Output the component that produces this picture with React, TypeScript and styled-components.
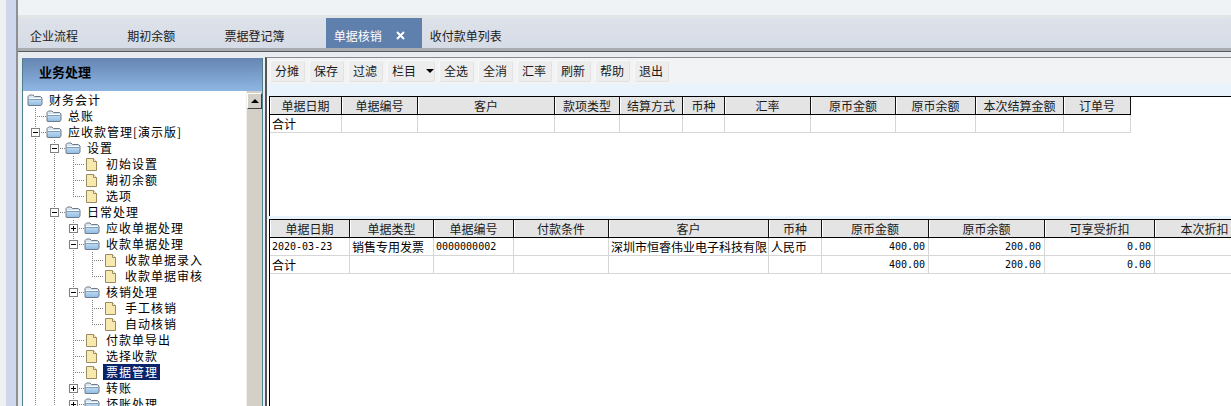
import React from "react";
import styled, { createGlobalStyle } from "styled-components";

const GlobalStyle = createGlobalStyle`
  html, body { margin: 0; padding: 0; height: 100%; overflow: hidden; background: #e9ecf1; }
  body { font-family: "Noto Sans CJK SC", "Liberation Sans", sans-serif; font-size: 12px; color: #000; }
  #root { height: 406px; }
`;

type Vertical = "none" | "through" | "end";
type IndentCell = { v: Vertical; h?: boolean; box?: "plus" | "minus" };
type TreeNode = { label: string; icon: "folder" | "file"; cells: IndentCell[]; selected?: boolean };

const thru: IndentCell = { v: "through" };

const TREE: TreeNode[] = [
  { label: "财务会计", icon: "folder", cells: [] },
  { label: "总账", icon: "folder", cells: [{ v: "through", h: true }] },
  { label: "应收款管理[演示版]", icon: "folder", cells: [{ v: "through", h: true, box: "minus" }] },
  { label: "设置", icon: "folder", cells: [thru, { v: "through", h: true, box: "minus" }] },
  { label: "初始设置", icon: "file", cells: [thru, thru, { v: "through", h: true }] },
  { label: "期初余额", icon: "file", cells: [thru, thru, { v: "through", h: true }] },
  { label: "选项", icon: "file", cells: [thru, thru, { v: "end", h: true }] },
  { label: "日常处理", icon: "folder", cells: [thru, { v: "through", h: true, box: "minus" }] },
  { label: "应收单据处理", icon: "folder", cells: [thru, thru, { v: "through", h: true, box: "plus" }] },
  { label: "收款单据处理", icon: "folder", cells: [thru, thru, { v: "through", h: true, box: "minus" }] },
  { label: "收款单据录入", icon: "file", cells: [thru, thru, thru, { v: "through", h: true }] },
  { label: "收款单据审核", icon: "file", cells: [thru, thru, thru, { v: "end", h: true }] },
  { label: "核销处理", icon: "folder", cells: [thru, thru, { v: "through", h: true, box: "minus" }] },
  { label: "手工核销", icon: "file", cells: [thru, thru, thru, { v: "through", h: true }] },
  { label: "自动核销", icon: "file", cells: [thru, thru, thru, { v: "end", h: true }] },
  { label: "付款单导出", icon: "file", cells: [thru, thru, { v: "through", h: true }] },
  { label: "选择收款", icon: "file", cells: [thru, thru, { v: "through", h: true }] },
  { label: "票据管理", icon: "file", cells: [thru, thru, { v: "through", h: true }], selected: true },
  { label: "转账", icon: "folder", cells: [thru, thru, { v: "through", h: true, box: "plus" }] },
  { label: "坏账处理", icon: "folder", cells: [thru, thru, { v: "through", h: true, box: "plus" }] },
];

const TABS = ["企业流程", "期初余额", "票据登记簿", "单据核销", "收付款单列表"];
const TOOLS = ["分摊", "保存", "过滤", "栏目", "全选", "全消", "汇率", "刷新", "帮助", "退出"];

const TOP_COLUMNS = [
  ["单据日期", 72], ["单据编号", 76], ["客户", 137], ["款项类型", 65], ["结算方式", 63], ["币种", 42],
  ["汇率", 86], ["原币金额", 85], ["原币余额", 80], ["本次结算金额", 88], ["订单号", 67],
] as const;

const BOTTOM_COLUMNS = [
  ["单据日期", 80], ["单据类型", 84], ["单据编号", 80], ["付款条件", 95], ["客户", 160], ["币种", 53],
  ["原币金额", 107], ["原币余额", 116], ["可享受折扣", 110], ["本次折扣", 100],
] as const;

function FolderIcon() {
  return (
    <svg width="16" height="16" viewBox="0 0 16 16">
      <defs>
        <linearGradient id="folderFill" x1="0" y1="0" x2="0" y2="1">
          <stop offset="0" stopColor="#e4f0fa" />
          <stop offset="1" stopColor="#8fbde6" />
        </linearGradient>
      </defs>
      <path
        d="M1 13V4.500L2.500 3h3.500l1.500 1.500h6L15 6v6l-1 1.500H2z"
        fill="url(#folderFill)"
        stroke="#6f7a84"
      />
      <path d="M2 6.500h12" stroke="#fff" fill="none" />
      <path d="M2 7.500h12" stroke="#7f9db8" fill="none" />
    </svg>
  );
}

function FileIcon() {
  return (
    <svg width="16" height="16" viewBox="0 0 16 16">
      <path d="M2.500 2.500h7l3 3v9h-10z" fill="#f8e9ae" stroke="#9a8c60" />
      <path d="M9.500 2.500v3h3" fill="#fffbe6" stroke="#9a8c60" />
    </svg>
  );
}

function CloseIcon() {
  return (
    <svg width="9" height="9" viewBox="0 0 9 9">
      <path d="M1 1l7 7M8 1l-7 7" stroke="#fff" strokeWidth="2" fill="none" />
    </svg>
  );
}

export default function App() {
  return (
    <Page>
      <GlobalStyle />
      <LeftRail />
      <Workspace>
        <TopStrip />
        <TabBar>
          {TABS.map((tab) => (
            <Tab key={tab} $active={tab === "单据核销"}>
              {tab}
              {tab === "单据核销" && (
                <TabClose>
                  <CloseIcon />
                </TabClose>
              )}
            </Tab>
          ))}
        </TabBar>
        <Main>
          <SidePanel>
            <SideHeader>业务处理</SideHeader>
            <SideBody>
              <Tree>
                {TREE.map((node) => (
                  <TreeRow key={node.label}>
                    {node.cells.map((cell, i) => (
                      <Indent key={i} $v={cell.v} $h={!!cell.h}>
                        {cell.box && (
                          <ExpandBox>
                            <BoxMark $plus={cell.box === "plus"} />
                          </ExpandBox>
                        )}
                      </Indent>
                    ))}
                    <NodeIcon>{node.icon === "folder" ? <FolderIcon /> : <FileIcon />}</NodeIcon>
                    <NodeLabel $selected={!!node.selected}>{node.label}</NodeLabel>
                  </TreeRow>
                ))}
              </Tree>
              <ScrollBar>
                <ScrollButton>
                  <ArrowUp />
                </ScrollButton>
              </ScrollBar>
            </SideBody>
          </SidePanel>
          <ContentPanel>
            <Toolbar>
              {TOOLS.map((tool) => (
                <ToolButton key={tool} $wide={tool === "栏目"}>
                  {tool}
                  {tool === "栏目" && <DropCaret />}
                </ToolButton>
              ))}
            </Toolbar>
            <BlueGap $h={12} />
            <GridPane $h={120}>
              <Grid $width={861}>
                <colgroup>
                  {TOP_COLUMNS.map(([name, w]) => (
                    <col key={name + w} style={{ width: w }} />
                  ))}
                </colgroup>
                <thead>
                  <tr>
                    {TOP_COLUMNS.map(([name, w]) => (
                      <HeadCell key={name + w}>{name}</HeadCell>
                    ))}
                  </tr>
                </thead>
                <tbody>
                  <tr>
                    {TOP_COLUMNS.map(([name, w], i) => (
                      <BodyCell key={name + w}>{i === 0 ? "合计" : ""}</BodyCell>
                    ))}
                  </tr>
                </tbody>
              </Grid>
            </GridPane>
            <BlueGap $h={3} />
            <GridPane>
              <Grid $width={885}>
                <colgroup>
                  {BOTTOM_COLUMNS.map(([name, w]) => (
                    <col key={name} style={{ width: w }} />
                  ))}
                </colgroup>
                <thead>
                  <tr>
                    {BOTTOM_COLUMNS.map(([name]) => (
                      <HeadCell key={name}>{name}</HeadCell>
                    ))}
                  </tr>
                </thead>
                <tbody>
                  <tr>
                    <BodyCell><Mono>2020-03-23</Mono></BodyCell>
                    <BodyCell>销售专用发票</BodyCell>
                    <BodyCell><Mono>0000000002</Mono></BodyCell>
                    <BodyCell />
                    <BodyCell>深圳市恒睿伟业电子科技有限</BodyCell>
                    <BodyCell>人民币</BodyCell>
                    <BodyCell $right><Mono>400.00</Mono></BodyCell>
                    <BodyCell $right><Mono>200.00</Mono></BodyCell>
                    <BodyCell $right><Mono>0.00</Mono></BodyCell>
                    <BodyCell />
                  </tr>
                  <tr>
                    <BodyCell>合计</BodyCell>
                    <BodyCell />
                    <BodyCell />
                    <BodyCell />
                    <BodyCell />
                    <BodyCell />
                    <BodyCell $right><Mono>400.00</Mono></BodyCell>
                    <BodyCell $right><Mono>200.00</Mono></BodyCell>
                    <BodyCell $right><Mono>0.00</Mono></BodyCell>
                    <BodyCell />
                  </tr>
                </tbody>
              </Grid>
            </GridPane>
          </ContentPanel>
        </Main>
      </Workspace>
    </Page>
  );
}

const Page = styled.div`
  display: flex;
  width: 1231px;
  height: 406px;
  overflow: hidden;
`;

const LeftRail = styled.div`
  flex: 0 0 18px;
  box-sizing: border-box;
  border-left: 6px solid #eef0f2;
  border-right: 2px solid #8e9092;
  background: #d0d7ec;
`;

const Workspace = styled.div`
  flex: 1;
  min-width: 0;
  display: flex;
  flex-direction: column;
`;

const TopStrip = styled.div`
  flex: 0 0 15px;
  background: #f0f3f6;
`;

const TabBar = styled.div`
  flex: 0 0 37px;
  box-sizing: border-box;
  display: flex;
  align-items: flex-end;
  padding: 3px 0 4px 4px;
  background: linear-gradient(#e2e5e5 0, #e2e5e5 3px, #dde1e9 4px, #d5dbe6 100%);
  box-shadow: inset 0 -1px 0 #5a5a5a, inset 0 -4px 0 #a9adb2;
`;

const Tab = styled.div<{ $active: boolean }>`
  height: 30px;
  line-height: 36px;
  padding: 0 ${({ $active }) => ($active ? "40px" : "41.25px")} 0 8px;
  white-space: nowrap;
  position: relative;
  color: ${({ $active }) => ($active ? "#fff" : "#1a1a1a")};
  background: ${({ $active }) => ($active ? "#5f7fad" : "transparent")};
`;

const TabClose = styled.span`
  position: absolute;
  left: 70px;
  top: 13px;
  width: 9px;
  height: 9px;
  svg { display: block; }
`;

const Main = styled.div`
  flex: 1;
  min-height: 0;
  display: flex;
  padding: 6px 0 0 4px;
  background: #e9ecf1;
`;

const SidePanel = styled.div`
  flex: 0 0 241px;
  box-sizing: border-box;
  display: flex;
  flex-direction: column;
  border-right: 1px solid #4f7f8c;
  border-left: 1px solid #4f7f8c;
`;

const SideHeader = styled.div`
  flex: 0 0 33px;
  line-height: 28px;
  padding-left: 16px;
  font-weight: 700;
  font-size: 13px;
  background: linear-gradient(#6584b2, #8fb6e3);
`;

const SideBody = styled.div`
  flex: 1;
  min-height: 0;
  display: flex;
  background: #fff;
  overflow: hidden;
`;

const Tree = styled.div`
  flex: 1;
  min-width: 0;
  padding: 1px 0 0 4px;
`;

const TreeRow = styled.div`
  display: flex;
  align-items: center;
  height: 16px;
`;

const Indent = styled.div<{ $v: Vertical; $h: boolean }>`
  flex: 0 0 19px;
  height: 16px;
  display: flex;
  align-items: center;
  background-repeat: no-repeat;
  background-image: ${({ $v }) =>
      $v === "none"
        ? "none"
        : "repeating-linear-gradient(to bottom, #808080 0 1px, transparent 1px 2px)"},
    ${({ $h }) =>
      $h ? "repeating-linear-gradient(to right, #808080 0 1px, transparent 1px 2px)" : "none"};
  background-position: 8px 0, 8px 8px;
  background-size: 1px ${({ $v }) => ($v === "end" ? "9px" : "100%")}, 11px 1px;
`;

const ExpandBox = styled.span`
  box-sizing: border-box;
  width: 9px;
  height: 9px;
  margin-left: 4px;
  border: 1px solid #808080;
  background: #fff;
  display: flex;
  align-items: center;
  justify-content: center;
`;

const BoxMark = styled.span<{ $plus: boolean }>`
  width: 5px;
  height: 5px;
  background-repeat: no-repeat;
  background-image: linear-gradient(#000, #000)
    ${({ $plus }) => ($plus ? ", linear-gradient(#000, #000)" : "")};
  background-position: 0 2px ${({ $plus }) => ($plus ? ", 2px 0" : "")};
  background-size: 5px 1px ${({ $plus }) => ($plus ? ", 1px 5px" : "")};
`;

const NodeIcon = styled.span`
  flex: 0 0 16px;
  height: 16px;
  display: block;
  svg { display: block; }
`;

const NodeLabel = styled.span<{ $selected: boolean }>`
  margin-left: 3px;
  padding: 0 2px 0 3px;
  height: 16px;
  line-height: 16px;
  letter-spacing: 1px;
  white-space: nowrap;
  color: ${({ $selected }) => ($selected ? "#fff" : "#000")};
  background: ${({ $selected }) => ($selected ? "#0a246a" : "transparent")};
`;

const ScrollBar = styled.div`
  flex: 0 0 15px;
  background: #d4d0c8;
  border-left: 1px solid #eeeeea;
`;

const ScrollButton = styled.div`
  box-sizing: border-box;
  height: 16px;
  margin-top: 2px;
  display: flex;
  align-items: center;
  justify-content: center;
  background: #d4d0c8;
  border: 1px solid;
  border-color: #fff #404040 #404040 #fff;
`;

const ArrowUp = styled.span`
  width: 0;
  height: 0;
  border-left: 4px solid transparent;
  border-right: 4px solid transparent;
  border-bottom: 4px solid #000;
`;

const ContentPanel = styled.div`
  flex: 1;
  min-width: 0;
  margin: -1px 0 0 2px;
  display: flex;
  flex-direction: column;
  border-left: 2px solid #555;
  border-top: 1px solid #8a8a8a;
  padding-left: 2px;
  background: #fff;
`;

const Toolbar = styled.div`
  flex: 0 0 26px;
  box-sizing: border-box;
  display: flex;
  gap: 5px;
  margin-left: -2px;
  padding: 2px 0 0 3px;
  background: #f1f3f5;
`;

const ToolButton = styled.div<{ $wide: boolean }>`
  box-sizing: border-box;
  width: ${({ $wide }) => ($wide ? "47px" : "34px")};
  height: 21px;
  line-height: 21px;
  padding-left: 5px;
  color: #1a1a1a;
  background: #ededed;
  border-radius: 2px;
  box-shadow: inset 1px 1px 0 #f8f8f8, 1px 1px 0 #e2e2e2;
  display: flex;
  align-items: center;
  white-space: nowrap;
`;

const DropCaret = styled.span`
  margin-left: 10px;
  width: 0;
  height: 0;
  border-left: 4px solid transparent;
  border-right: 4px solid transparent;
  border-top: 4px solid #000;
`;

const BlueGap = styled.div<{ $h: number }>`
  flex: 0 0 ${({ $h }) => $h}px;
  margin-left: -2px;
  background: #e9f3fc;
`;

const GridPane = styled.div<{ $h?: number }>`
  flex: ${({ $h }) => ($h ? `0 0 ${$h}px` : "1")};
  min-height: 0;
  box-sizing: border-box;
  overflow: hidden;
  border-top: 1px solid #000;
  border-left: 1px solid #000;
  background: #fff;
`;

const Grid = styled.table<{ $width: number }>`
  table-layout: fixed;
  width: ${({ $width }) => $width}px;
  border-collapse: separate;
  border-spacing: 0;
`;

const HeadCell = styled.th`
  height: 17px;
  padding: 0;
  font-weight: 400;
  font-size: 12px;
  line-height: 17px;
  text-align: center;
  color: #1a1a1a;
  background: #e4e4e4;
  border-bottom: 1px solid #000;
  border-right: 1px solid #111;
  box-shadow: inset 1px 0 0 #fff;
  white-space: nowrap;
  overflow: hidden;
`;

const BodyCell = styled.td<{ $right?: boolean }>`
  height: 17px;
  padding: 0 ${({ $right }) => ($right ? "3px" : "0")} 0 ${({ $right }) => ($right ? "0" : "2px")};
  font-size: 12px;
  line-height: 17px;
  text-align: ${({ $right }) => ($right ? "right" : "left")};
  border-bottom: 1px solid #d6d6d6;
  border-right: 1px solid #d6d6d6;
  white-space: nowrap;
  overflow: hidden;
`;

const Mono = styled.span`
  display: block;
  height: 17px;
  line-height: 18px;
  font-family: "DejaVu Sans Mono", "Liberation Mono", monospace;
  font-size: 10px;
`;
